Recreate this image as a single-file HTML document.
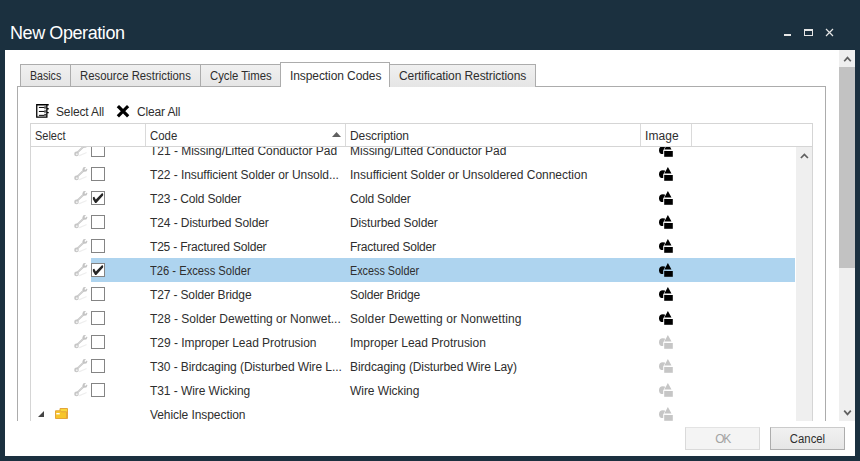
<!DOCTYPE html>
<html><head><meta charset="utf-8">
<style>
*{box-sizing:border-box;margin:0;padding:0}
html,body{width:860px;height:461px;overflow:hidden;background:#1b303f}
body{position:relative;font-family:"Liberation Sans",sans-serif;font-size:12px;color:#2e2e2e}
.a{position:absolute}
.t{position:absolute;white-space:nowrap;line-height:14px}
.t.c{left:0;width:100%;text-align:center}
#win{left:5px;top:50px;width:850px;height:406px;background:#fff}
#clip{left:0;top:0;width:839px;height:421px;overflow:hidden}
.tab{position:absolute;top:64px;height:23px;border:1px solid #acacac;border-right:none;border-bottom:none;background:linear-gradient(#f0f0f0,#e5e5e5)}
.tab.sel{top:62px;height:25px;border-right:1px solid #acacac;background:#fff}
#content{left:17px;top:86px;width:809px;height:400px;border:1px solid #acacac}
#grid{left:30px;top:123px;width:783px;height:400px;border:1px solid #d5d5d5}
#rows{left:31px;top:147px;width:765px;height:300px;overflow:hidden}
.cb{position:absolute;width:14px;height:14px;border:1px solid #848484;background:#fff}
.btn{position:absolute;top:427px;width:75px;height:23px;border:1px solid #adadad;border-top-color:#cbcbcb;background:linear-gradient(#f1f1f1,#e6e6e6)}
.btn.dis{border-color:#dadada;border-top-color:#e3e3e3;background:#f4f4f4;color:#a3a3a3}

</style></head><body>
<div class="t" style="left:10px;top:23px;letter-spacing:-0.417px;font-size:18px;line-height:20px;color:#fff">New Operation</div>
<div class="a" style="left:784px;top:34px;width:7px;height:2px;background:#e6e6e6"></div>
<div class="a" style="left:804px;top:29px;width:9px;height:7px;border:1px solid #e6e6e6;border-top-width:2px"></div>
<svg class="a" style="left:825px;top:28px" width="9" height="9" viewBox="0 0 9 9"><path d="M1 1L8 8M8 1L1 8" stroke="#e6e6e6" stroke-width="1.2"/></svg>
<div class="a" id="win"></div>
<div class="a" id="clip">
<div class="tab" style="left:20px;width:50px"><div class="t" style="left:9px;top:4px;transform:scaleX(0.8829);transform-origin:left;">Basics</div></div>
<div class="tab" style="left:70px;width:130px"><div class="t" style="left:9px;top:4px;transform:scaleX(0.9441);transform-origin:left;">Resource Restrictions</div></div>
<div class="tab" style="left:200px;width:80px"><div class="t" style="left:9px;top:4px;transform:scaleX(0.9446);transform-origin:left;">Cycle Times</div></div>
<div class="a" id="content"></div>
<div class="tab sel" style="left:280px;width:110px"><div class="t" style="left:9px;top:6px;letter-spacing:-0.087px;">Inspection Codes</div></div>
<div class="tab" style="left:389px;width:147px;border-right:1px solid #acacac"><div class="t" style="left:9px;top:4px;letter-spacing:-0.084px;">Certification Restrictions</div></div>
<svg class="a" style="left:32px;top:100px" width="20" height="20" viewBox="0 0 20 20"><path d="M4.1 4.75H16.7M4.75 4.1V17.8M4.1 17.15H14.6M14.85 5.4V17.8M14.85 8.75H16.7M14.85 12.6H16.7" fill="none" stroke="#000" stroke-width="1.3"/><path d="M6.9 7.45H12.4M6.9 11.45H12.4M6.9 15.35H12.4" stroke="#000" stroke-width="1"/><path d="M12.2 6.4H14.4V7.6H12.2ZM12.2 10.4H14.4V11.6H12.2ZM12.2 14.3H14.4V15.5H12.2Z" fill="#000"/><path d="M13 7.6V9.2M13 11.6V13.2" stroke="#000" stroke-width="0.9"/></svg>
<div class="t" style="left:56px;top:105px;letter-spacing:-0.133px;">Select All</div>
<svg class="a" style="left:116px;top:104px" width="14" height="14" viewBox="0 0 14 14"><path d="M3 3.2L11 11.2M11 3.2L3 11.2" stroke="#000" stroke-width="3.2" stroke-linecap="square"/></svg>
<div class="t" style="left:137px;top:105px;letter-spacing:-0.150px;">Clear All</div>
<div class="a" id="grid"></div>
<div class="a" style="left:145px;top:124px;width:1px;height:22px;background:#dadada"></div>
<div class="a" style="left:345px;top:124px;width:1px;height:22px;background:#dadada"></div>
<div class="a" style="left:640px;top:124px;width:1px;height:22px;background:#dadada"></div>
<div class="a" style="left:691px;top:124px;width:1px;height:22px;background:#dadada"></div>
<div class="a" style="left:31px;top:146px;width:781px;height:1px;background:#d5d5d5"></div>
<div class="t" style="left:35px;top:129px;transform:scaleX(0.9147);transform-origin:left;">Select</div>
<div class="t" style="left:150px;top:129px;transform:scaleX(0.9483);transform-origin:left;">Code</div>
<svg class="a" style="left:332px;top:132px" width="9" height="5" viewBox="0 0 9 5"><path d="M0 5L4.5 0L9 5Z" fill="#606060"/></svg>
<div class="t" style="left:350px;top:129px;letter-spacing:-0.100px;">Description</div>
<div class="t" style="left:645px;top:129px;letter-spacing:0.100px;">Image</div>
<div class="a" id="rows">
<svg class="a" style="left:41px;top:-7px" width="18" height="18" viewBox="0 0 18 18"><path d="M7.4 15.6L14.2 12.8" stroke="#eeeeee" stroke-width="1.2" stroke-linecap="round"/><path d="M5.2 12.6L12 6.2" stroke="#c8c8c8" stroke-width="1.9" stroke-linecap="round"/><path d="M5.6 12L11.6 6.4" stroke="#dcdcdc" stroke-width="0.6"/><circle cx="12.9" cy="5.4" r="2.4" fill="#c4c4c4"/><path d="M13.3 5L15.9 2.4" stroke="#fff" stroke-width="1.5" stroke-linecap="round"/><circle cx="4.5" cy="13.9" r="2.3" fill="#c6c6c6"/><circle cx="4.8" cy="14.2" r="1" fill="#f0f0f0"/></svg>
<div class="cb" style="left:60px;top:-4px"></div>
<div class="t" style="left:119px;top:-3px;letter-spacing:-0.030px;">T21 - Missing/Lifted Conductor Pad</div>
<div class="t" style="left:319px;top:-3px;letter-spacing:-0.011px;">Missing/Lifted Conductor Pad</div>
<svg class="a" style="left:626px;top:-5px" width="18" height="16" viewBox="0 0 18 16"><circle cx="5.9" cy="8.2" r="3.9" fill="#000"/><path d="M10.9 -0.4L15.4 8.2H6.4Z" fill="#fff"/><path d="M10.9 1L14.5 7.5H7.3Z" fill="#000"/><rect x="6.2" y="8.1" width="10.6" height="7.6" fill="#fff"/><rect x="7.2" y="9" width="8.6" height="5.8" fill="#000"/></svg>
<svg class="a" style="left:41px;top:17px" width="18" height="18" viewBox="0 0 18 18"><path d="M7.4 15.6L14.2 12.8" stroke="#eeeeee" stroke-width="1.2" stroke-linecap="round"/><path d="M5.2 12.6L12 6.2" stroke="#c8c8c8" stroke-width="1.9" stroke-linecap="round"/><path d="M5.6 12L11.6 6.4" stroke="#dcdcdc" stroke-width="0.6"/><circle cx="12.9" cy="5.4" r="2.4" fill="#c4c4c4"/><path d="M13.3 5L15.9 2.4" stroke="#fff" stroke-width="1.5" stroke-linecap="round"/><circle cx="4.5" cy="13.9" r="2.3" fill="#c6c6c6"/><circle cx="4.8" cy="14.2" r="1" fill="#f0f0f0"/></svg>
<div class="cb" style="left:60px;top:20px"></div>
<div class="t" style="left:119px;top:21px;letter-spacing:-0.065px;">T22 - Insufficient Solder or Unsold...</div>
<div class="t" style="left:319px;top:21px;letter-spacing:-0.014px;">Insufficient Solder or Unsoldered Connection</div>
<svg class="a" style="left:626px;top:19px" width="18" height="16" viewBox="0 0 18 16"><circle cx="5.9" cy="8.2" r="3.9" fill="#000"/><path d="M10.9 -0.4L15.4 8.2H6.4Z" fill="#fff"/><path d="M10.9 1L14.5 7.5H7.3Z" fill="#000"/><rect x="6.2" y="8.1" width="10.6" height="7.6" fill="#fff"/><rect x="7.2" y="9" width="8.6" height="5.8" fill="#000"/></svg>
<svg class="a" style="left:41px;top:41px" width="18" height="18" viewBox="0 0 18 18"><path d="M7.4 15.6L14.2 12.8" stroke="#eeeeee" stroke-width="1.2" stroke-linecap="round"/><path d="M5.2 12.6L12 6.2" stroke="#c8c8c8" stroke-width="1.9" stroke-linecap="round"/><path d="M5.6 12L11.6 6.4" stroke="#dcdcdc" stroke-width="0.6"/><circle cx="12.9" cy="5.4" r="2.4" fill="#c4c4c4"/><path d="M13.3 5L15.9 2.4" stroke="#fff" stroke-width="1.5" stroke-linecap="round"/><circle cx="4.5" cy="13.9" r="2.3" fill="#c6c6c6"/><circle cx="4.8" cy="14.2" r="1" fill="#f0f0f0"/></svg>
<div class="cb" style="left:60px;top:44px"></div>
<svg class="a" style="left:60px;top:44px" width="14" height="14" viewBox="0 0 14 14"><path d="M1.9 6.3L3.3 5.7L4.8 8.6L11.2 2L12.2 3.1L12.1 4.4L5.3 11.9L4.1 11.9L1.9 8.3Z" fill="#262626"/></svg>
<div class="t" style="left:119px;top:45px;letter-spacing:-0.169px;">T23 - Cold Solder</div>
<div class="t" style="left:319px;top:45px;letter-spacing:-0.190px;">Cold Solder</div>
<svg class="a" style="left:626px;top:43px" width="18" height="16" viewBox="0 0 18 16"><circle cx="5.9" cy="8.2" r="3.9" fill="#000"/><path d="M10.9 -0.4L15.4 8.2H6.4Z" fill="#fff"/><path d="M10.9 1L14.5 7.5H7.3Z" fill="#000"/><rect x="6.2" y="8.1" width="10.6" height="7.6" fill="#fff"/><rect x="7.2" y="9" width="8.6" height="5.8" fill="#000"/></svg>
<svg class="a" style="left:41px;top:65px" width="18" height="18" viewBox="0 0 18 18"><path d="M7.4 15.6L14.2 12.8" stroke="#eeeeee" stroke-width="1.2" stroke-linecap="round"/><path d="M5.2 12.6L12 6.2" stroke="#c8c8c8" stroke-width="1.9" stroke-linecap="round"/><path d="M5.6 12L11.6 6.4" stroke="#dcdcdc" stroke-width="0.6"/><circle cx="12.9" cy="5.4" r="2.4" fill="#c4c4c4"/><path d="M13.3 5L15.9 2.4" stroke="#fff" stroke-width="1.5" stroke-linecap="round"/><circle cx="4.5" cy="13.9" r="2.3" fill="#c6c6c6"/><circle cx="4.8" cy="14.2" r="1" fill="#f0f0f0"/></svg>
<div class="cb" style="left:60px;top:68px"></div>
<div class="t" style="left:119px;top:69px;letter-spacing:-0.090px;">T24 - Disturbed Solder</div>
<div class="t" style="left:319px;top:69px;letter-spacing:-0.107px;">Disturbed Solder</div>
<svg class="a" style="left:626px;top:67px" width="18" height="16" viewBox="0 0 18 16"><circle cx="5.9" cy="8.2" r="3.9" fill="#000"/><path d="M10.9 -0.4L15.4 8.2H6.4Z" fill="#fff"/><path d="M10.9 1L14.5 7.5H7.3Z" fill="#000"/><rect x="6.2" y="8.1" width="10.6" height="7.6" fill="#fff"/><rect x="7.2" y="9" width="8.6" height="5.8" fill="#000"/></svg>
<svg class="a" style="left:41px;top:89px" width="18" height="18" viewBox="0 0 18 18"><path d="M7.4 15.6L14.2 12.8" stroke="#eeeeee" stroke-width="1.2" stroke-linecap="round"/><path d="M5.2 12.6L12 6.2" stroke="#c8c8c8" stroke-width="1.9" stroke-linecap="round"/><path d="M5.6 12L11.6 6.4" stroke="#dcdcdc" stroke-width="0.6"/><circle cx="12.9" cy="5.4" r="2.4" fill="#c4c4c4"/><path d="M13.3 5L15.9 2.4" stroke="#fff" stroke-width="1.5" stroke-linecap="round"/><circle cx="4.5" cy="13.9" r="2.3" fill="#c6c6c6"/><circle cx="4.8" cy="14.2" r="1" fill="#f0f0f0"/></svg>
<div class="cb" style="left:60px;top:92px"></div>
<div class="t" style="left:119px;top:93px;letter-spacing:-0.195px;">T25 - Fractured Solder</div>
<div class="t" style="left:319px;top:93px;letter-spacing:-0.227px;">Fractured Solder</div>
<svg class="a" style="left:626px;top:91px" width="18" height="16" viewBox="0 0 18 16"><circle cx="5.9" cy="8.2" r="3.9" fill="#000"/><path d="M10.9 -0.4L15.4 8.2H6.4Z" fill="#fff"/><path d="M10.9 1L14.5 7.5H7.3Z" fill="#000"/><rect x="6.2" y="8.1" width="10.6" height="7.6" fill="#fff"/><rect x="7.2" y="9" width="8.6" height="5.8" fill="#000"/></svg>
<div class="a" style="left:60px;top:111px;width:704px;height:24px;background:#aed4ef"></div>
<svg class="a" style="left:41px;top:113px" width="18" height="18" viewBox="0 0 18 18"><path d="M7.4 15.6L14.2 12.8" stroke="#eeeeee" stroke-width="1.2" stroke-linecap="round"/><path d="M5.2 12.6L12 6.2" stroke="#c8c8c8" stroke-width="1.9" stroke-linecap="round"/><path d="M5.6 12L11.6 6.4" stroke="#dcdcdc" stroke-width="0.6"/><circle cx="12.9" cy="5.4" r="2.4" fill="#c4c4c4"/><path d="M13.3 5L15.9 2.4" stroke="#fff" stroke-width="1.5" stroke-linecap="round"/><circle cx="4.5" cy="13.9" r="2.3" fill="#c6c6c6"/><circle cx="4.8" cy="14.2" r="1" fill="#f0f0f0"/></svg>
<div class="cb" style="left:60px;top:116px"></div>
<svg class="a" style="left:60px;top:116px" width="14" height="14" viewBox="0 0 14 14"><path d="M1.9 6.3L3.3 5.7L4.8 8.6L11.2 2L12.2 3.1L12.1 4.4L5.3 11.9L4.1 11.9L1.9 8.3Z" fill="#262626"/></svg>
<div class="t" style="left:119px;top:117px;transform:scaleX(0.9315);transform-origin:left;">T26 - Excess Solder</div>
<div class="t" style="left:319px;top:117px;transform:scaleX(0.9014);transform-origin:left;">Excess Solder</div>
<svg class="a" style="left:626px;top:115px" width="18" height="16" viewBox="0 0 18 16"><circle cx="5.9" cy="8.2" r="3.9" fill="#000"/><path d="M10.9 -0.4L15.4 8.2H6.4Z" fill="#aed4ef"/><path d="M10.9 1L14.5 7.5H7.3Z" fill="#000"/><rect x="6.2" y="8.1" width="10.6" height="7.6" fill="#aed4ef"/><rect x="7.2" y="9" width="8.6" height="5.8" fill="#000"/></svg>
<svg class="a" style="left:41px;top:137px" width="18" height="18" viewBox="0 0 18 18"><path d="M7.4 15.6L14.2 12.8" stroke="#eeeeee" stroke-width="1.2" stroke-linecap="round"/><path d="M5.2 12.6L12 6.2" stroke="#c8c8c8" stroke-width="1.9" stroke-linecap="round"/><path d="M5.6 12L11.6 6.4" stroke="#dcdcdc" stroke-width="0.6"/><circle cx="12.9" cy="5.4" r="2.4" fill="#c4c4c4"/><path d="M13.3 5L15.9 2.4" stroke="#fff" stroke-width="1.5" stroke-linecap="round"/><circle cx="4.5" cy="13.9" r="2.3" fill="#c6c6c6"/><circle cx="4.8" cy="14.2" r="1" fill="#f0f0f0"/></svg>
<div class="cb" style="left:60px;top:140px"></div>
<div class="t" style="left:119px;top:141px;letter-spacing:-0.139px;">T27 - Solder Bridge</div>
<div class="t" style="left:319px;top:141px;letter-spacing:-0.217px;">Solder Bridge</div>
<svg class="a" style="left:626px;top:139px" width="18" height="16" viewBox="0 0 18 16"><circle cx="5.9" cy="8.2" r="3.9" fill="#000"/><path d="M10.9 -0.4L15.4 8.2H6.4Z" fill="#fff"/><path d="M10.9 1L14.5 7.5H7.3Z" fill="#000"/><rect x="6.2" y="8.1" width="10.6" height="7.6" fill="#fff"/><rect x="7.2" y="9" width="8.6" height="5.8" fill="#000"/></svg>
<svg class="a" style="left:41px;top:161px" width="18" height="18" viewBox="0 0 18 18"><path d="M7.4 15.6L14.2 12.8" stroke="#eeeeee" stroke-width="1.2" stroke-linecap="round"/><path d="M5.2 12.6L12 6.2" stroke="#c8c8c8" stroke-width="1.9" stroke-linecap="round"/><path d="M5.6 12L11.6 6.4" stroke="#dcdcdc" stroke-width="0.6"/><circle cx="12.9" cy="5.4" r="2.4" fill="#c4c4c4"/><path d="M13.3 5L15.9 2.4" stroke="#fff" stroke-width="1.5" stroke-linecap="round"/><circle cx="4.5" cy="13.9" r="2.3" fill="#c6c6c6"/><circle cx="4.8" cy="14.2" r="1" fill="#f0f0f0"/></svg>
<div class="cb" style="left:60px;top:164px"></div>
<div class="t" style="left:119px;top:165px;letter-spacing:-0.000px;">T28 - Solder Dewetting or Nonwet...</div>
<div class="t" style="left:319px;top:165px;letter-spacing:0.090px;">Solder Dewetting or Nonwetting</div>
<svg class="a" style="left:626px;top:163px" width="18" height="16" viewBox="0 0 18 16"><circle cx="5.9" cy="8.2" r="3.9" fill="#000"/><path d="M10.9 -0.4L15.4 8.2H6.4Z" fill="#fff"/><path d="M10.9 1L14.5 7.5H7.3Z" fill="#000"/><rect x="6.2" y="8.1" width="10.6" height="7.6" fill="#fff"/><rect x="7.2" y="9" width="8.6" height="5.8" fill="#000"/></svg>
<svg class="a" style="left:41px;top:185px" width="18" height="18" viewBox="0 0 18 18"><path d="M7.4 15.6L14.2 12.8" stroke="#eeeeee" stroke-width="1.2" stroke-linecap="round"/><path d="M5.2 12.6L12 6.2" stroke="#c8c8c8" stroke-width="1.9" stroke-linecap="round"/><path d="M5.6 12L11.6 6.4" stroke="#dcdcdc" stroke-width="0.6"/><circle cx="12.9" cy="5.4" r="2.4" fill="#c4c4c4"/><path d="M13.3 5L15.9 2.4" stroke="#fff" stroke-width="1.5" stroke-linecap="round"/><circle cx="4.5" cy="13.9" r="2.3" fill="#c6c6c6"/><circle cx="4.8" cy="14.2" r="1" fill="#f0f0f0"/></svg>
<div class="cb" style="left:60px;top:188px"></div>
<div class="t" style="left:119px;top:189px;letter-spacing:-0.031px;">T29 - Improper Lead Protrusion</div>
<div class="t" style="left:319px;top:189px;letter-spacing:-0.009px;">Improper Lead Protrusion</div>
<svg class="a" style="left:626px;top:187px" width="18" height="16" viewBox="0 0 18 16"><circle cx="5.9" cy="8.2" r="3.9" fill="#c6c6c6"/><path d="M10.9 -0.4L15.4 8.2H6.4Z" fill="#fff"/><path d="M10.9 1L14.5 7.5H7.3Z" fill="#c6c6c6"/><rect x="6.2" y="8.1" width="10.6" height="7.6" fill="#fff"/><rect x="7.2" y="9" width="8.6" height="5.8" fill="#c6c6c6"/></svg>
<svg class="a" style="left:41px;top:209px" width="18" height="18" viewBox="0 0 18 18"><path d="M7.4 15.6L14.2 12.8" stroke="#eeeeee" stroke-width="1.2" stroke-linecap="round"/><path d="M5.2 12.6L12 6.2" stroke="#c8c8c8" stroke-width="1.9" stroke-linecap="round"/><path d="M5.6 12L11.6 6.4" stroke="#dcdcdc" stroke-width="0.6"/><circle cx="12.9" cy="5.4" r="2.4" fill="#c4c4c4"/><path d="M13.3 5L15.9 2.4" stroke="#fff" stroke-width="1.5" stroke-linecap="round"/><circle cx="4.5" cy="13.9" r="2.3" fill="#c6c6c6"/><circle cx="4.8" cy="14.2" r="1" fill="#f0f0f0"/></svg>
<div class="cb" style="left:60px;top:212px"></div>
<div class="t" style="left:119px;top:213px;letter-spacing:-0.083px;">T30 - Birdcaging (Disturbed Wire L...</div>
<div class="t" style="left:319px;top:213px;letter-spacing:-0.103px;">Birdcaging (Disturbed Wire Lay)</div>
<svg class="a" style="left:626px;top:211px" width="18" height="16" viewBox="0 0 18 16"><circle cx="5.9" cy="8.2" r="3.9" fill="#c6c6c6"/><path d="M10.9 -0.4L15.4 8.2H6.4Z" fill="#fff"/><path d="M10.9 1L14.5 7.5H7.3Z" fill="#c6c6c6"/><rect x="6.2" y="8.1" width="10.6" height="7.6" fill="#fff"/><rect x="7.2" y="9" width="8.6" height="5.8" fill="#c6c6c6"/></svg>
<svg class="a" style="left:41px;top:233px" width="18" height="18" viewBox="0 0 18 18"><path d="M7.4 15.6L14.2 12.8" stroke="#eeeeee" stroke-width="1.2" stroke-linecap="round"/><path d="M5.2 12.6L12 6.2" stroke="#c8c8c8" stroke-width="1.9" stroke-linecap="round"/><path d="M5.6 12L11.6 6.4" stroke="#dcdcdc" stroke-width="0.6"/><circle cx="12.9" cy="5.4" r="2.4" fill="#c4c4c4"/><path d="M13.3 5L15.9 2.4" stroke="#fff" stroke-width="1.5" stroke-linecap="round"/><circle cx="4.5" cy="13.9" r="2.3" fill="#c6c6c6"/><circle cx="4.8" cy="14.2" r="1" fill="#f0f0f0"/></svg>
<div class="cb" style="left:60px;top:236px"></div>
<div class="t" style="left:119px;top:237px;letter-spacing:-0.065px;">T31 - Wire Wicking</div>
<div class="t" style="left:319px;top:237px;letter-spacing:-0.055px;">Wire Wicking</div>
<svg class="a" style="left:626px;top:235px" width="18" height="16" viewBox="0 0 18 16"><circle cx="5.9" cy="8.2" r="3.9" fill="#c6c6c6"/><path d="M10.9 -0.4L15.4 8.2H6.4Z" fill="#fff"/><path d="M10.9 1L14.5 7.5H7.3Z" fill="#c6c6c6"/><rect x="6.2" y="8.1" width="10.6" height="7.6" fill="#fff"/><rect x="7.2" y="9" width="8.6" height="5.8" fill="#c6c6c6"/></svg>
<svg class="a" style="left:7px;top:264px" width="6" height="6" viewBox="0 0 6 6"><path d="M6 0V6H0Z" fill="#444"/></svg>
<svg class="a" style="left:23px;top:260px" width="15" height="14" viewBox="0 0 15 14"><path d="M6 1.5H13.5V11.5H6Z" fill="#f9d83a" stroke="#e4a43a" stroke-width="1"/><path d="M1.5 3.8H6.5L7.5 4.8H12.5V11.5H1.5Z" fill="#f7c52a" stroke="#e4a43a" stroke-width="1"/><rect x="2.3" y="6" width="3.4" height="1.4" fill="#fff"/></svg>
<div class="t" style="left:119px;top:261px;letter-spacing:-0.071px;">Vehicle Inspection</div>
<svg class="a" style="left:626px;top:259px" width="18" height="16" viewBox="0 0 18 16"><circle cx="5.9" cy="8.2" r="3.9" fill="#c6c6c6"/><path d="M10.9 -0.4L15.4 8.2H6.4Z" fill="#fff"/><path d="M10.9 1L14.5 7.5H7.3Z" fill="#c6c6c6"/><rect x="6.2" y="8.1" width="10.6" height="7.6" fill="#fff"/><rect x="7.2" y="9" width="8.6" height="5.8" fill="#c6c6c6"/></svg>
</div>
<div class="a" style="left:796px;top:147px;width:16px;height:280px;background:#efefef"></div>
<svg class="a" style="left:796px;top:147px" width="16" height="16" viewBox="0 0 16 16"><path d="M4.9 11L8.4 7.4L11.9 11" fill="none" stroke="#606060" stroke-width="1.7"/></svg>
</div>
<div class="a" style="left:839px;top:50px;width:16px;height:371px;background:#efefef"></div>
<div class="a" style="left:839px;top:67px;width:16px;height:201px;background:#c2c2c2"></div>
<svg class="a" style="left:839px;top:50px" width="16" height="17" viewBox="0 0 16 17"><path d="M5.2 11.2L8.5 7.6L11.8 11.2" fill="none" stroke="#606060" stroke-width="1.7"/></svg>
<svg class="a" style="left:839px;top:404px" width="16" height="17" viewBox="0 0 16 17"><path d="M5.2 6.6L8.5 10.4L11.8 6.6" fill="none" stroke="#606060" stroke-width="1.7"/></svg>
<div class="btn dis" style="left:685px"><div class="t c" style="left:0px;top:4px;letter-spacing:-1.300px;">OK</div></div>
<div class="btn" style="left:770px"><div class="t c" style="left:0px;top:4px;transform:scaleX(0.9432);transform-origin:center;">Cancel</div></div>
</body></html>
